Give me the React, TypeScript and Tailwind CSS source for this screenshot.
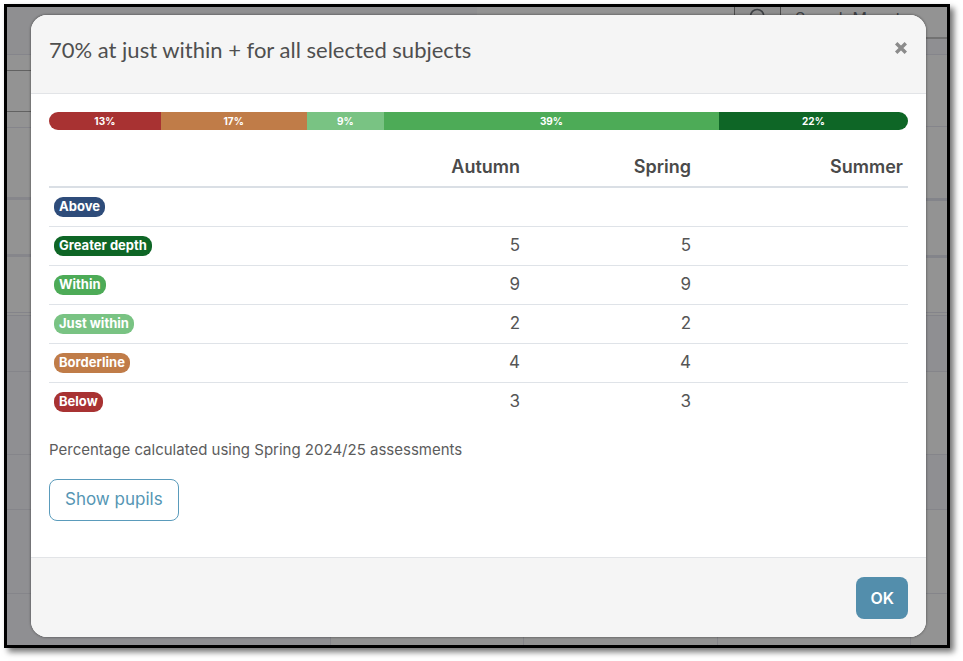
import { useState } from 'react';
import { Search } from 'lucide-react';
import clsx from 'clsx';

const segments = [
  { percent: 13, className: 'bg-[#a83232]' },
  { percent: 17, className: 'bg-[#c07c48]' },
  { percent: 9, className: 'bg-[#79c383]' },
  { percent: 39, className: 'bg-[#4dab57]' },
  { percent: 22, className: 'bg-[#0e6626]' },
];

const rows = [
  { label: 'Above', className: 'bg-[#2e4c7a]', autumn: '', spring: '', summer: '' },
  { label: 'Greater depth', className: 'bg-[#0e6626]', autumn: '5', spring: '5', summer: '' },
  { label: 'Within', className: 'bg-[#4dab57]', autumn: '9', spring: '9', summer: '' },
  { label: 'Just within', className: 'bg-[#79c383]', autumn: '2', spring: '2', summer: '' },
  { label: 'Borderline', className: 'bg-[#c07c48]', autumn: '4', spring: '4', summer: '' },
  { label: 'Below', className: 'bg-[#a83232]', autumn: '3', spring: '3', summer: '' },
];

// The dimmed page behind the dialog
const Backdrop = () => {
  return (
    <div className="col-start-1 row-start-1 flex flex-col bg-[#939393]">
      <div className="flex">
        <div className="flex-1">
          <div className="h-12 border-b border-[#85858b] bg-[#8f8f91]" />
          <div className="h-4 border-b border-[#626262]" />
          <div className="h-[41px] border-b border-[#626262]" />
          <div className="h-4 border-b border-[#85858b]" />
          <div className="h-18 border-b-3 border-[#86868b]" />
          <div className="h-[57px] border-b-3 border-[#86868b]" />
          <div className="h-[59px] border-b-4 border-double border-[#84848a]" />
          <div className="h-14 border-b border-[#85858a] bg-[#8f8f92]" />
          <div className="h-[83px] border-b border-[#85858a] bg-[#8f8f92]" />
          <div className="h-[55px] border-b border-[#85858a] bg-[#8f8f92]" />
          <div className="h-[84px] border-b border-[#85858a] bg-[#8f8f92]" />
        </div>
        <div className="flex-1">
          <div className="flex h-8 justify-end border-b-2 border-[#727272] pr-9">
            <span className="flex w-[47px] justify-center border-x border-[#4c4c4c] bg-[#8d8d8d]">
              <Search className="h-5 w-5 text-[#3f4246]" />
            </span>
            <input
              aria-label="Search"
              placeholder="Search Mount"
              className="w-[130px] pb-2 pl-[14px] text-base text-[#3f4246] placeholder:text-[#3f4246]"
            />
          </div>
          <div className="h-4 border-b border-[#85858b] bg-[#8f8f92]" />
          <div className="h-18 border-b border-[#85858b]" />
          <div className="h-[74px] border-b-3 border-[#83848a]" />
          <div className="h-[57px] border-b-3 border-[#83848a]" />
          <div className="h-[58px] border-b-4 border-double border-[#84848a]" />
          <div className="h-14 border-b border-[#85858a] bg-[#8f8f92]" />
          <div className="h-[83px] border-b border-[#85858a]" />
          <div className="h-[55px] border-b border-[#85858a] bg-[#8f8f92]" />
          <div className="h-[84px] border-b border-[#85858a]" />
        </div>
      </div>
      <div className="flex flex-1">
        <div className="w-[324px] border-r border-[#85858a] bg-[#8f8f92]" />
        <div className="flex-1 border-r border-[#85858a]" />
        <div className="flex-1 border-r border-[#85858a]" />
        <div className="flex-1 border-r border-[#85858a]" />
        <div className="w-9" />
      </div>
    </div>
  );
};

const ResultBar = () => {
  return (
    <div className="flex h-[18px] overflow-hidden rounded-full">
      {segments.map(segment => (
        <div
          key={segment.percent}
          className={clsx('flex items-center justify-center text-[10px] font-bold text-white', segment.className)}
          style={{ width: `${segment.percent}%` }}
        >
          {segment.percent}%
        </div>
      ))}
    </div>
  );
};

const ResultTable = () => {
  return (
    <table className="mt-[18px] w-full table-fixed text-right text-[#555555]">
      <thead>
        <tr className="h-[39px] border-b-2 border-[#dadfe5] text-lg text-[#4a4a4a]">
          <td />
          <th scope="col" className="w-[171px] px-[5px] font-semibold">Autumn</th>
          <th scope="col" className="w-[171px] px-[5px] font-semibold">Spring</th>
          <th scope="col" className="w-[212px] px-[5px] font-semibold">Summer</th>
        </tr>
      </thead>
      <tbody>
        {rows.map(row => (
          <tr key={row.label} className="h-[39px] border-b border-[#dfe3e8] text-[17px] last:border-b-0">
            <th scope="row" className="px-[5px] text-left text-[13px]">
              <span className={clsx('flex h-5 w-fit items-center rounded-[9px] px-[5px] font-bold text-white', row.className)}>
                {row.label}
              </span>
            </th>
            <td className="px-[5px]">{row.autumn}</td>
            <td className="px-[5px]">{row.spring}</td>
            <td className="px-[5px]">{row.summer}</td>
          </tr>
        ))}
      </tbody>
    </table>
  );
};

const App = () => {
  const [open, setOpen] = useState(true);

  return (
    <div className="flex min-h-screen bg-white pt-1 pr-[13px] pb-[13px] pl-1 font-['Inter',sans-serif]">
      <div className="grid flex-1 border-3 border-black shadow-[4px_4px_6px_rgba(0,0,0,0.55)]">
        <Backdrop />
        {open && (
          <div
            role="dialog"
            aria-labelledby="dialog-title"
            className="relative col-start-1 row-start-1 mt-2 mr-[21px] mb-2 ml-6 flex flex-col overflow-hidden rounded-2xl bg-white shadow-[0_0_2px_1px_rgba(0,0,0,0.25)]"
          >
            <div className="flex h-[79px] items-start justify-between border-b border-[#e2e4e7] bg-[#f5f5f5] px-[18px] pt-[19px]">
              <h1 id="dialog-title" className="font-['Lato',sans-serif] text-[22px] leading-8 text-[#4f4f4f]">
                70% at just within + for all selected subjects
              </h1>
              <button type="button" aria-label="Close" onClick={() => setOpen(false)} className="mt-[7px] text-[#8b8b8b]">
                <svg viewBox="0 0 14 14" className="h-[14px] w-[14px]" stroke="currentColor" strokeWidth="3.4">
                  <path d="M2.2 2.2L11.8 11.8M11.8 2.2L2.2 11.8" />
                </svg>
              </button>
            </div>

            <div className="flex-1 px-[18px] pt-[18px]">
              <ResultBar />
              <ResultTable />
              <p className="mt-[17px] text-[15px] leading-6 text-[#5c5c5c]">
                Percentage calculated using Spring 2024/25 assessments
              </p>
              <button type="button" className="mt-[17px] h-[42px] rounded-lg border border-[#5a9bbb] px-[15px] text-[17px] text-[#5596b4]">
                Show pupils
              </button>
            </div>

            <div className="flex h-20 items-center justify-end border-t border-[#e2e4e7] bg-[#f5f5f5] px-[18px]">
              <button
                type="button"
                onClick={() => setOpen(false)}
                className="h-[42px] rounded-lg bg-[#538eac] px-[14px] text-base font-semibold text-white"
              >
                OK
              </button>
            </div>
          </div>
        )}
      </div>
    </div>
  );
};

export default App;
